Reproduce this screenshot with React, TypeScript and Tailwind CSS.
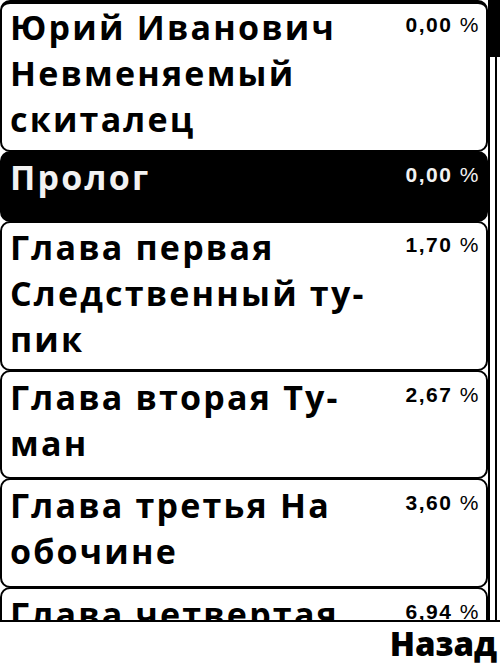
import React from 'react';

type Chapter = {
  lines: string[];
  percent: string;
  box: string;
  selected?: boolean;
};

// table of contents, scrolled so the sixth entry is cut by the softkey bar
const chapters: Chapter[] = [
  { lines: ['Юрий Иванович', 'Невменяемый', 'скиталец'], percent: '0,00', box: 'h-[152px] border-t-4 pt-0' },
  { lines: ['Пролог'], percent: '0,00', box: 'h-[71px] -mt-px pt-[1px]', selected: true },
  { lines: ['Глава первая', 'Следственный ту-', 'пик'], percent: '1,70', box: 'h-[150px] -mt-px pt-[1px]' },
  { lines: ['Глава вторая Ту-', 'ман'], percent: '2,67', box: 'h-[109px] -mt-px pt-[2px]' },
  { lines: ['Глава третья На', 'обочине'], percent: '3,60', box: 'h-[110px] -mt-px pt-[2px]' },
  { lines: ['Глава четвертая'], percent: '6,94', box: 'h-[110px] -mt-px pt-[2px]' },
];

const titleFont = { fontFamily: "'Open Sans', 'Noto Sans', 'DejaVu Sans', sans-serif" };
const numFont = { fontFamily: "'Liberation Sans', Arial, sans-serif" };

function Row({ c }: { c: Chapter }) {
  return (
    <div
      className={`flex shrink-0 items-start justify-between border-2 border-black rounded-[10px] pl-2 pr-[6px] ${c.box} ${
        c.selected ? 'bg-black text-[#f2f2f2]' : 'bg-white text-black'
      }`}
    >
      <div className="text-[34px] font-bold leading-[46px] tracking-[2.2px] whitespace-nowrap" style={titleFont}>
        {c.lines.map((l) => (
          <div key={l}>{l}</div>
        ))}
      </div>
      <div className="mt-[10px] text-[21px] font-bold leading-none tracking-[1.5px] whitespace-nowrap" style={numFont}>
        {c.percent} <span className="font-normal">%</span>
      </div>
    </div>
  );
}

export default function App() {
  return (
    <div className="w-[500px] h-[666px] bg-white flex flex-col overflow-hidden">
      <div className="flex h-[620px] overflow-hidden">
        <div className="w-[488px] flex flex-col">
          {chapters.map((c) => (
            <Row key={c.lines[0]} c={c} />
          ))}
        </div>
        {/* scroll indicator */}
        <div className="w-[12px] flex flex-col">
          <div className="h-[57px] bg-black" />
          <div className="flex-1 w-[9px] border-x-2 border-black" />
        </div>
      </div>
      <div className="h-[2px] bg-black" />
      <div className="flex-1 flex justify-end pr-[3px]">
        <span className="text-[33px] font-extrabold leading-[44px] text-black" style={titleFont}>
          Назад
        </span>
      </div>
    </div>
  );
}
